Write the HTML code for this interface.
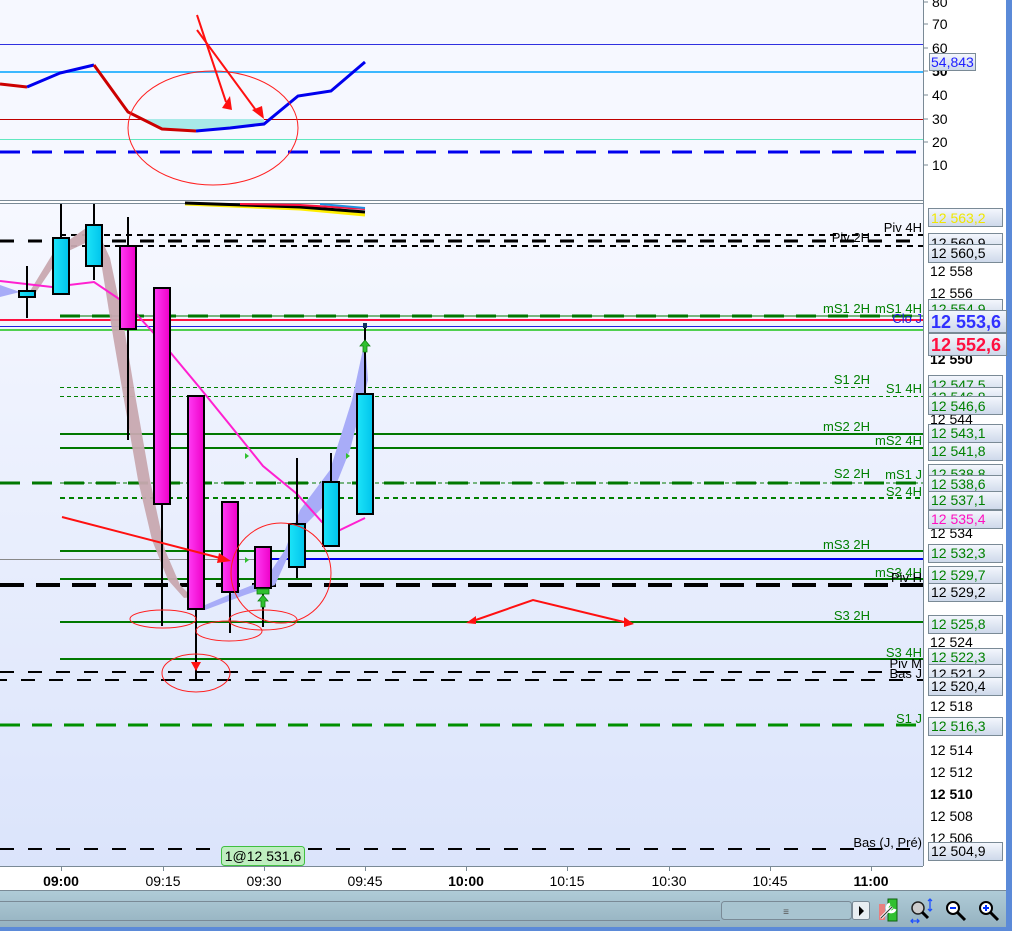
<!DOCTYPE html>
<html><head><meta charset="utf-8"><style>
body{margin:0;width:1012px;height:931px;overflow:hidden;background:#fff;font-family:"Liberation Sans",sans-serif}
svg{display:block}
text{font-family:"Liberation Sans",sans-serif}
</style></head><body>
<svg width="1012" height="931" viewBox="0 0 1012 931" xmlns="http://www.w3.org/2000/svg">
<defs>
<linearGradient id="bg" x1="0" y1="0" x2="0" y2="1"><stop offset="0" stop-color="#f6f8ff"/><stop offset="1" stop-color="#dbe4fb"/></linearGradient>
<linearGradient id="cy" x1="0" y1="0" x2="1" y2="0"><stop offset="0" stop-color="#1de4f8"/><stop offset="1" stop-color="#00c4ec"/></linearGradient>
<linearGradient id="mg" x1="0" y1="0" x2="1" y2="0"><stop offset="0" stop-color="#ff3cf4"/><stop offset="1" stop-color="#ee00c8"/></linearGradient>
<linearGradient id="bx" x1="0" y1="0" x2="0" y2="1"><stop offset="0" stop-color="#f4f7fd"/><stop offset="1" stop-color="#cdd8ea"/></linearGradient>
<linearGradient id="tb" x1="0" y1="0" x2="0" y2="1"><stop offset="0" stop-color="#b0ccd8"/><stop offset="1" stop-color="#95b2c0"/></linearGradient>
</defs>
<rect width="1012" height="931" fill="#fff"/>
<rect x="0" y="0" width="923" height="200" fill="#f6f8ff"/>
<line x1="0" y1="200.5" x2="923" y2="200.5" stroke="#7a8a96"/>
<line x1="0" y1="44.5" x2="923" y2="44.5" stroke="#3030e0"/>
<line x1="0" y1="72" x2="923" y2="72" stroke="#3cb8ff" stroke-width="2"/>
<line x1="0" y1="119.5" x2="923" y2="119.5" stroke="#c00000"/>
<line x1="0" y1="139.5" x2="923" y2="139.5" stroke="#60e8c0"/>
<line x1="0" y1="152" x2="923" y2="152" stroke="#0000ee" stroke-width="3" stroke-dasharray="20,12"/>
<polygon points="140,119 162,129 196,131 230,128 264,124 264,119" fill="#a8eae8"/>
<polyline points="0,84 27,87" fill="none" stroke="#cc0000" stroke-width="3"/>
<polyline points="27,87 60,73 94,65" fill="none" stroke="#0000ee" stroke-width="3"/>
<polyline points="94,65 128,112 162,129 196,131" fill="none" stroke="#cc0000" stroke-width="3"/>
<polyline points="196,131 230,128 264,124 298,96 331,91 365,62" fill="none" stroke="#0000ee" stroke-width="3"/>
<ellipse cx="213" cy="128" rx="85" ry="57" fill="none" stroke="#ff2020" stroke-width="1"/>
<g stroke="#ff1010" stroke-width="2" fill="#ff1010">
<line x1="197" y1="15" x2="226" y2="102"/><polygon points="222,108 230,96 232,110" stroke="none"/>
<line x1="197" y1="30" x2="258" y2="113"/><polygon points="264,119 252,110 262,106" stroke="none"/>
</g>
<rect x="0" y="203" width="923" height="663" fill="url(#bg)"/>
<line x1="0" y1="203.5" x2="923" y2="203.5" stroke="#7a8a96"/>
<line x1="923.5" y1="0" x2="923.5" y2="866" stroke="#7a8a96"/>
<line x1="0" y1="866.5" x2="923" y2="866.5" stroke="#7a8a96"/>
<polyline points="185,204 300,209 365,215" fill="none" stroke="#ffee00" stroke-width="3"/>
<polyline points="185,203 300,207 365,212" fill="none" stroke="#000" stroke-width="3"/>
<polyline points="240,204 300,205 365,209" fill="none" stroke="#ff1040" stroke-width="2"/>
<polyline points="320,204 365,208" fill="none" stroke="#2090e0" stroke-width="2"/>
<g fill="none">
<line x1="60" y1="235" x2="923" y2="235" stroke="#000" stroke-width="2" stroke-dasharray="6,5"/>
<line x1="0" y1="241" x2="923" y2="241" stroke="#000" stroke-width="3" stroke-dasharray="14,14"/>
<line x1="60" y1="246" x2="923" y2="246" stroke="#000" stroke-width="2" stroke-dasharray="6,5"/>
<line x1="60" y1="316" x2="923" y2="316" stroke="#007800" stroke-width="3" stroke-dasharray="20,12"/>
<line x1="60" y1="316" x2="923" y2="316" stroke="#007800" stroke-width="1"/>
<line x1="0" y1="320" x2="923" y2="320" stroke="#ff1040" stroke-width="2"/>
<line x1="0" y1="326.5" x2="923" y2="326.5" stroke="#2020e0"/>
<line x1="0" y1="330" x2="923" y2="330" stroke="#50d050" stroke-width="2"/>
<line x1="60" y1="387.5" x2="870" y2="387.5" stroke="#008000" stroke-dasharray="4,3"/>
<line x1="60" y1="396.5" x2="923" y2="396.5" stroke="#008000" stroke-dasharray="4,3"/>
<line x1="60" y1="434" x2="923" y2="434" stroke="#007800" stroke-width="2"/>
<line x1="60" y1="448" x2="923" y2="448" stroke="#007800" stroke-width="2"/>
<line x1="0" y1="483" x2="923" y2="483" stroke="#007800" stroke-width="3" stroke-dasharray="20,12"/>
<line x1="60" y1="483" x2="923" y2="483" stroke="#007800" stroke-width="1" stroke-dasharray="4,3"/>
<line x1="60" y1="498" x2="923" y2="498" stroke="#008000" stroke-width="2" stroke-dasharray="5,4"/>
<line x1="60" y1="551" x2="923" y2="551" stroke="#007800" stroke-width="2"/>
<line x1="0" y1="559.5" x2="923" y2="559.5" stroke="#888"/>
<line x1="263" y1="559" x2="923" y2="559" stroke="#0000ee" stroke-width="2"/>
<line x1="60" y1="579" x2="923" y2="579" stroke="#007800" stroke-width="2"/>
<line x1="0" y1="585" x2="923" y2="585" stroke="#000" stroke-width="4" stroke-dasharray="24,12"/>
<line x1="60" y1="622" x2="923" y2="622" stroke="#007800" stroke-width="2"/>
<line x1="60" y1="659" x2="923" y2="659" stroke="#007800" stroke-width="2"/>
<line x1="0" y1="672" x2="923" y2="672" stroke="#000" stroke-width="2" stroke-dasharray="14,14"/>
<line x1="0" y1="680" x2="923" y2="680" stroke="#000" stroke-width="2" stroke-dasharray="14,14" stroke-dashoffset="7"/>
<line x1="0" y1="725" x2="923" y2="725" stroke="#009000" stroke-width="3" stroke-dasharray="20,12"/>
<line x1="0" y1="849" x2="923" y2="849" stroke="#000" stroke-width="2" stroke-dasharray="14,14"/>
</g>
<!-- ribbons -->
<polygon points="27,296 55,250 86,228 98,232 110,258 122,315 136,400 150,480 165,550 180,585 192,597 184,598 168,580 152,540 138,480 124,400 112,330 102,268 92,240 62,254 32,298" fill="#c8a8b0" opacity="0.95"/>
<polygon points="0,285 20,292 0,297" fill="#a8acf8"/>
<polygon points="198,608 240,590 265,580 285,550 300,510 330,470 352,400 365,340 368,380 350,450 330,500 300,530 275,585 245,595 205,610" fill="#a8acf8"/>
<polyline points="0,281 52,287 94,282 128,305 160,340 200,388 230,425 263,466 297,494 322,522 340,530 365,518" fill="none" stroke="#ff20d0" stroke-width="2"/>
<g stroke="#000" stroke-width="2">
<line x1="27" y1="266" x2="27" y2="318"/><rect x="19" y="291" width="16" height="6" fill="url(#cy)"/>
<line x1="61" y1="204" x2="61" y2="238"/><rect x="53" y="238" width="16" height="56" fill="url(#cy)"/>
<line x1="94" y1="204" x2="94" y2="280"/><rect x="86" y="225" width="16" height="41" fill="url(#cy)"/>
<line x1="128" y1="217" x2="128" y2="440"/><rect x="120" y="246" width="16" height="83" fill="url(#mg)"/>
<line x1="162" y1="288" x2="162" y2="626"/><rect x="154" y="288" width="16" height="216" fill="url(#mg)"/>
<line x1="196" y1="396" x2="196" y2="680"/><rect x="188" y="396" width="16" height="213" fill="url(#mg)"/>
<line x1="230" y1="502" x2="230" y2="633"/><rect x="222" y="502" width="16" height="90" fill="url(#mg)"/>
<line x1="263" y1="547" x2="263" y2="627"/><rect x="255" y="547" width="16" height="41" fill="url(#mg)"/>
<line x1="297" y1="458" x2="297" y2="578"/><rect x="289" y="524" width="16" height="43" fill="url(#cy)"/>
<line x1="331" y1="453" x2="331" y2="482"/><rect x="323" y="482" width="16" height="64" fill="url(#cy)"/>
<line x1="365" y1="323" x2="365" y2="394"/><rect x="357" y="394" width="16" height="120" fill="url(#cy)"/>
</g>
<g fill="#30c030" stroke="#108010" stroke-width="0.8">
<polygon points="365,340 360,346 363,346 363,352 367,352 367,346 370,346"/>
<polygon points="263,595 258,601 261,601 261,607 265,607 265,601 268,601"/>
<rect x="257" y="589" width="12" height="5"/>
<polygon points="245,453 249,456 245,459" stroke="none"/><polygon points="346,453 350,456 346,459" stroke="none"/><polygon points="245,557 249,560 245,563" stroke="none"/>
</g>
<rect x="363" y="323" width="4" height="5" fill="#103060"/>
<g fill="none" stroke="#ff2020" stroke-width="1">
<circle cx="281" cy="573" r="50"/>
<ellipse cx="163" cy="619" rx="33" ry="9"/>
<ellipse cx="229" cy="631" rx="33" ry="10"/>
<ellipse cx="263" cy="620" rx="34" ry="10"/>
<ellipse cx="196" cy="673" rx="34" ry="19"/>
</g>
<g stroke="#ff1010" stroke-width="2" fill="#ff1010">
<line x1="62" y1="517" x2="224" y2="559"/><polygon points="231,561 219,553 217,563" stroke="none"/>
<polygon points="191,662 201,662 196,671" stroke="none"/>
<polyline points="470,622 533,600 628,623" fill="none"/>
<polygon points="466,623 476,616 476,624" stroke="none"/><polygon points="634,624 624,617 624,627" stroke="none"/>
</g>
<g font-size="13" fill="#008000" text-anchor="end">
<text x="922" y="232" fill="#000">Piv 4H</text>
<text x="870" y="242" fill="#000">Piv 2H</text>
<text x="870" y="313">mS1 2H</text>
<text x="922" y="313">mS1 4H</text>
<text x="922" y="323" fill="#2020e0">Clo J</text>
<text x="870" y="384">S1 2H</text>
<text x="922" y="393">S1 4H</text>
<text x="870" y="431">mS2 2H</text>
<text x="922" y="445">mS2 4H</text>
<text x="870" y="478">S2 2H</text>
<text x="922" y="479">mS1 J</text>
<text x="922" y="496">S2 4H</text>
<text x="870" y="549">mS3 2H</text>
<text x="922" y="577">mS3 4H</text>
<text x="922" y="582" fill="#000">Piv H</text>
<text x="870" y="620">S3 2H</text>
<text x="922" y="657">S3 4H</text>
<text x="922" y="668" fill="#000">Piv M</text>
<text x="922" y="678" fill="#000">Bas J</text>
<text x="922" y="723">S1 J</text>
<text x="922" y="847" fill="#000">Bas (J, Pré)</text>
</g>
<rect x="221.5" y="846.5" width="83" height="19" rx="3" fill="#bfeec0" stroke="#40c040"/>
<text x="263" y="861" font-size="14" text-anchor="middle" fill="#000">1@12 531,6</text>
<rect x="924" y="0" width="84" height="866" fill="#fff"/>
<rect x="1006" y="0" width="6" height="931" fill="#5b8ad8"/>
<g font-size="14" fill="#000">
<text x="932" y="7">80</text><text x="932" y="29">70</text><text x="932" y="53">60</text><text x="932" y="76" font-weight="bold">50</text><text x="932" y="100">40</text><text x="932" y="124">30</text><text x="932" y="147">20</text><text x="932" y="170">10</text>
<text x="930" y="276">12 558</text><text x="930" y="298">12 556</text><text x="930" y="364" font-weight="bold">12 550</text><text x="930" y="424">12 544</text><text x="930" y="538">12 534</text><text x="930" y="647">12 524</text><text x="930" y="711">12 518</text><text x="930" y="755">12 514</text><text x="930" y="777">12 512</text><text x="930" y="799" font-weight="bold">12 510</text><text x="930" y="821">12 508</text><text x="930" y="843">12 506</text>
</g>
<g stroke="#7a8a96">
<line x1="924" y1="2" x2="928" y2="2"/><line x1="924" y1="24" x2="928" y2="24"/><line x1="924" y1="48" x2="928" y2="48"/><line x1="924" y1="71" x2="928" y2="71"/><line x1="924" y1="95" x2="928" y2="95"/><line x1="924" y1="119" x2="928" y2="119"/><line x1="924" y1="142" x2="928" y2="142"/><line x1="924" y1="165" x2="928" y2="165"/>
</g>
<g font-size="14">
<rect x="929.5" y="53.5" width="46" height="17" fill="url(#bx)" stroke="#7a8a96"/><text x="931" y="67" fill="#2020ff">54,843</text>
<rect x="928.5" y="208.5" width="74" height="18" fill="url(#bx)" stroke="#7a8a96"/><text x="931" y="223" fill="#f0e800">12 563,2</text>
<rect x="928.5" y="233.5" width="74" height="18" fill="url(#bx)" stroke="#7a8a96"/><text x="931" y="248" fill="#000">12 560,9</text>
<rect x="928.5" y="244.5" width="74" height="18" fill="url(#bx)" stroke="#7a8a96"/><text x="931" y="258" fill="#000">12 560,5</text>
<rect x="928.5" y="299.5" width="74" height="18" fill="url(#bx)" stroke="#7a8a96"/><text x="931" y="314" fill="#008000">12 554,9</text>
<rect x="928.5" y="310.5" width="78" height="22" fill="url(#bx)" stroke="#7a8a96"/><text x="931" y="328" font-size="18" font-weight="bold" fill="#3030ff">12 553,6</text>
<rect x="928.5" y="333.5" width="78" height="22" fill="url(#bx)" stroke="#7a8a96"/><text x="931" y="351" font-size="18" font-weight="bold" fill="#ff1040">12 552,6</text>
<rect x="928.5" y="375.5" width="74" height="18" fill="url(#bx)" stroke="#7a8a96"/><text x="931" y="390" fill="#008000">12 547,5</text>
<rect x="928.5" y="387.5" width="74" height="18" fill="url(#bx)" stroke="#7a8a96"/><text x="931" y="402" fill="#008000">12 546,8</text>
<rect x="928.5" y="396.5" width="74" height="18" fill="url(#bx)" stroke="#7a8a96"/><text x="931" y="411" fill="#008000">12 546,6</text>
<rect x="928.5" y="424.5" width="74" height="18" fill="url(#bx)" stroke="#7a8a96"/><text x="931" y="438" fill="#008000">12 543,1</text>
<rect x="928.5" y="442.5" width="74" height="18" fill="url(#bx)" stroke="#7a8a96"/><text x="931" y="456" fill="#008000">12 541,8</text>
<rect x="928.5" y="464.5" width="74" height="18" fill="url(#bx)" stroke="#7a8a96"/><text x="931" y="479" fill="#008000">12 538,8</text>
<rect x="928.5" y="475.5" width="74" height="18" fill="url(#bx)" stroke="#7a8a96"/><text x="931" y="489" fill="#008000">12 538,6</text>
<rect x="928.5" y="491.5" width="74" height="18" fill="url(#bx)" stroke="#7a8a96"/><text x="931" y="505" fill="#008000">12 537,1</text>
<rect x="928.5" y="510.5" width="74" height="18" fill="url(#bx)" stroke="#7a8a96"/><text x="931" y="524" fill="#ff10c0">12 535,4</text>
<rect x="928.5" y="544.5" width="74" height="18" fill="url(#bx)" stroke="#7a8a96"/><text x="931" y="558" fill="#008000">12 532,3</text>
<rect x="928.5" y="566.5" width="74" height="18" fill="url(#bx)" stroke="#7a8a96"/><text x="931" y="580" fill="#008000">12 529,7</text>
<rect x="928.5" y="583.5" width="74" height="18" fill="url(#bx)" stroke="#7a8a96"/><text x="931" y="597" fill="#000">12 529,2</text>
<rect x="928.5" y="615.5" width="74" height="18" fill="url(#bx)" stroke="#7a8a96"/><text x="931" y="629" fill="#008000">12 525,8</text>
<rect x="928.5" y="648.5" width="74" height="18" fill="url(#bx)" stroke="#7a8a96"/><text x="931" y="662" fill="#008000">12 522,3</text>
<rect x="928.5" y="664.5" width="74" height="18" fill="url(#bx)" stroke="#7a8a96"/><text x="931" y="679" fill="#000">12 521,2</text>
<rect x="928.5" y="677.5" width="74" height="18" fill="url(#bx)" stroke="#7a8a96"/><text x="931" y="691" fill="#000">12 520,4</text>
<rect x="928.5" y="717.5" width="74" height="18" fill="url(#bx)" stroke="#7a8a96"/><text x="931" y="731" fill="#008000">12 516,3</text>
<rect x="928.5" y="842.5" width="74" height="18" fill="url(#bx)" stroke="#7a8a96"/><text x="931" y="856" fill="#000">12 504,9</text>
</g>
<g font-size="14" fill="#000" text-anchor="middle">
<text x="61" y="886" font-weight="bold">09:00</text><text x="163" y="886">09:15</text><text x="264" y="886">09:30</text><text x="365" y="886">09:45</text><text x="466" y="886" font-weight="bold">10:00</text><text x="567" y="886">10:15</text><text x="669" y="886">10:30</text><text x="770" y="886">10:45</text><text x="871" y="886" font-weight="bold">11:00</text>
</g>
<g stroke="#7a8a96"><line x1="61.5" y1="867" x2="61.5" y2="871"/><line x1="163.5" y1="867" x2="163.5" y2="871"/><line x1="264.5" y1="867" x2="264.5" y2="871"/><line x1="365.5" y1="867" x2="365.5" y2="871"/><line x1="466.5" y1="867" x2="466.5" y2="871"/><line x1="567.5" y1="867" x2="567.5" y2="871"/><line x1="669.5" y1="867" x2="669.5" y2="871"/><line x1="770.5" y1="867" x2="770.5" y2="871"/><line x1="871.5" y1="867" x2="871.5" y2="871"/></g>
<rect x="0" y="890" width="1006" height="37" fill="url(#tb)"/>
<line x1="0" y1="890.5" x2="1006" y2="890.5" stroke="#7a8a96"/>
<line x1="0" y1="901.5" x2="720" y2="901.5" stroke="#7a8a96"/>
<line x1="0" y1="920.5" x2="720" y2="920.5" stroke="#7a8a96"/>
<rect x="0" y="927" width="1012" height="4" fill="#5b8ad8"/>
<rect x="721.5" y="901.5" width="130" height="18" rx="3" fill="#a8c4d0" stroke="#7a8a96"/>
<text x="786" y="915" font-size="10" text-anchor="middle" fill="#555">≡</text>
<rect x="852.5" y="901.5" width="17" height="18" rx="2" fill="#e8eef2" stroke="#7a8a96"/>
<polygon points="859,906 864,911 859,916" fill="#000"/>
<rect x="879" y="904" width="6" height="16" fill="#e88080"/><rect x="888" y="899" width="9" height="22" fill="#30c030" stroke="#106010"/>
<path d="M881 918 L892 907 M890 904 a4 4 0 1 0 5 5" stroke="#fff" stroke-width="3" fill="none"/>
<path d="M881 918 L892 907" stroke="#333" stroke-width="1" fill="none"/>
<circle cx="918" cy="908" r="6" fill="#ccc" stroke="#222" stroke-width="1.5"/><line x1="922" y1="912" x2="928" y2="918" stroke="#000" stroke-width="3"/>
<path d="M930 899 V911 M928 901 l2-2 2 2 M928 909 l2 2 2-2 M911 921 h8 M913 919 l-2 2 2 2 M917 919 l2 2-2 2" stroke="#2050ff" stroke-width="1.3" fill="none"/>
<circle cx="953" cy="908" r="6" fill="#fff" stroke="#000" stroke-width="2"/><line x1="957" y1="912" x2="965" y2="920" stroke="#000" stroke-width="3"/><line x1="950" y1="908" x2="956" y2="908" stroke="#0030ff" stroke-width="2"/>
<circle cx="986" cy="908" r="6" fill="#fff" stroke="#000" stroke-width="2"/><line x1="990" y1="912" x2="998" y2="920" stroke="#000" stroke-width="3"/><path d="M983 908 h6 M986 905 v6" stroke="#0030ff" stroke-width="2"/>
</svg>
</body></html>
